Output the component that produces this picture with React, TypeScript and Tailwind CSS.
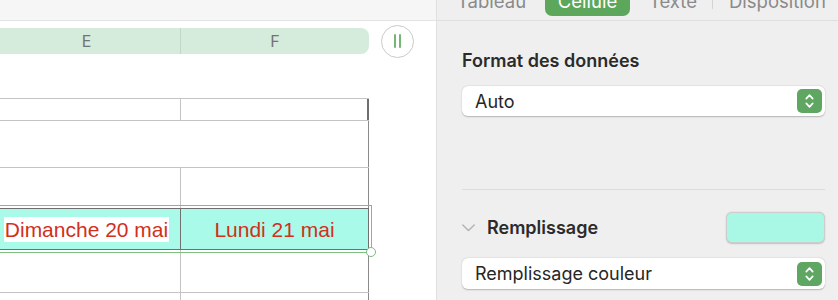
import React from "react";

function Stepper() {
  return (
    <div className="w-[25px] h-[24px] rounded-[5px] bg-[#5ea662] flex items-center justify-center shrink-0">
      <svg width="25" height="24" viewBox="0 0 25 24" fill="none">
        <path d="M9.3 9.6 L12.5 6.2 L15.7 9.6" stroke="white" strokeWidth="1.7" strokeLinecap="round" strokeLinejoin="round" />
        <path d="M9.3 14.4 L12.5 17.8 L15.7 14.4" stroke="white" strokeWidth="1.7" strokeLinecap="round" strokeLinejoin="round" />
      </svg>
    </div>
  );
}

export default function App() {
  return (
    <div className="w-[838px] h-[300px] flex overflow-hidden bg-white">
      {/* Canvas */}
      <div className="w-[436px] shrink-0 flex flex-col bg-white overflow-hidden font-['Liberation_Sans',Arial,sans-serif]">
        <div className="h-[21px] shrink-0 bg-[#f6f6f6] border-b border-[#e3e3e3]" />
        <div className="mt-[7px] h-[26px] shrink-0 flex items-center">
          <div className="ml-[-7px] w-[376px] h-[26px] rounded-[8px] bg-[#d5ebdc] flex text-[16px] text-[#737373] font-['Inter',sans-serif] shrink-0">
            <div className="w-[188px] border-r border-[#bfd8c7] flex items-center justify-center">E</div>
            <div className="flex-1 flex items-center justify-center">F</div>
          </div>
          <div className="ml-[12px] w-[33px] h-[33px] rounded-full border-[1.5px] border-[#cacaca] bg-white flex items-center justify-center gap-[3px] shrink-0">
            <span className="w-[2px] h-[14px] bg-[#74b674] rounded-full" />
            <span className="w-[2px] h-[14px] bg-[#74b674] rounded-full" />
          </div>
        </div>

        <div className="mt-[44px] ml-[-7px] w-[376px] shrink-0 flex flex-col">
          <div className="h-[22px] shrink-0 border-t border-[#c4c4c4] flex">
            <div className="w-[188px] border-r border-[#c4c4c4]" />
            <div className="flex-1 border-r-2 border-[#6e6e6e]" />
          </div>
          <div className="h-[47px] shrink-0 border-t border-[#c4c4c4] flex">
            <div className="w-[188px]" />
            <div className="flex-1 border-r border-[#8a8a8a]" />
          </div>
          <div className="h-[41px] shrink-0 border-t border-[#c4c4c4] flex">
            <div className="w-[188px] border-r border-[#c4c4c4]" />
            <div className="flex-1 border-r border-[#8a8a8a]" />
          </div>
          <div className="relative h-[42px] shrink-0 border-t border-b border-[#707070] bg-[#aafae9] flex outline outline-1 outline-[#80bd80] outline-offset-[2px]">
            <div className="w-[188px] border-r border-[#707070] flex items-center justify-center">
              <span className="bg-white px-[1px] leading-[25px] text-[21px] text-[#d22f1c]">Dimanche 20 mai</span>
            </div>
            <div className="flex-1 border-r border-[#707070] flex items-center justify-center">
              <span className="leading-[25px] text-[21px] text-[#d22f1c]">Lundi 21 mai</span>
            </div>
            <div className="absolute right-[-7px] bottom-[-8px] w-[10px] h-[10px] rounded-full border-[1.5px] border-[#7cba7c] bg-white" />
          </div>
          <div className="h-[42px] shrink-0 flex">
            <div className="w-[188px] border-r border-[#c4c4c4]" />
            <div className="flex-1 border-r border-[#8a8a8a]" />
          </div>
          <div className="h-[20px] shrink-0 border-t border-[#c4c4c4] flex">
            <div className="w-[188px] border-r border-[#c4c4c4]" />
            <div className="flex-1 border-r border-[#8a8a8a]" />
          </div>
        </div>
      </div>

      {/* Sidebar */}
      <div className="flex-1 bg-[#efefef] border-l border-[#e0e0e0] font-['Inter',sans-serif]">
        <div className="h-[21px] border-b border-[#dedede] overflow-hidden">
          <div className="-mt-[12px] h-[28px] flex items-center pl-[20px] text-[18.5px] text-[#8a8a8a] whitespace-nowrap">
            <div className="w-[69px]">Tableau</div>
            <div className="ml-[19px] w-[85px] h-[27px] rounded-[7px] bg-[#5ca75c] text-white flex items-center justify-center">Cellule</div>
            <div className="ml-[19px] w-[48px]">Texte</div>
            <div className="ml-[15px] w-px h-[14px] bg-[#d4d4d4]" />
            <div className="ml-[16px]">Disposition</div>
          </div>
        </div>

        <div className="pl-[25px]">
          <div className="mt-[29px] text-[18px] font-semibold leading-[22px] text-[#2b2b2b]">Format des données</div>
          <div className="mt-[14px] w-[363px] h-[30px] bg-white rounded-[6px] shadow-[0_0.5px_1.5px_rgba(0,0,0,0.25)] flex items-center pl-[13px] pr-[3px] text-[18px] text-[#262626]">
            <span className="flex-1">Auto</span>
            <Stepper />
          </div>

          <div className="mt-[73px] w-[363px] h-px bg-[#dcdcdc]" />

          <div className="mt-[22px] w-[363px] h-[31px] flex items-center">
            <svg width="13" height="8" viewBox="0 0 13 8" fill="none" className="shrink-0">
              <path d="M0.8 1 L6.5 6.6 L12.2 1" stroke="#b3b3b3" strokeWidth="1.4" strokeLinecap="round" strokeLinejoin="round" />
            </svg>
            <span className="ml-[12px] flex-1 text-[18px] font-semibold text-[#2b2b2b]">Remplissage</span>
            <div className="w-[99px] h-[31px] rounded-[6px] bg-[#a9f8e6] border border-[#cdcdcd] shadow-[0_0.5px_1.5px_rgba(0,0,0,0.2)]" />
          </div>

          <div className="mt-[15px] w-[363px] h-[31px] bg-white rounded-[6px] shadow-[0_0.5px_1.5px_rgba(0,0,0,0.25)] flex items-center pl-[13px] pr-[3px] text-[18px] text-[#262626]">
            <span className="flex-1">Remplissage couleur</span>
            <Stepper />
          </div>
        </div>
      </div>
    </div>
  );
}
